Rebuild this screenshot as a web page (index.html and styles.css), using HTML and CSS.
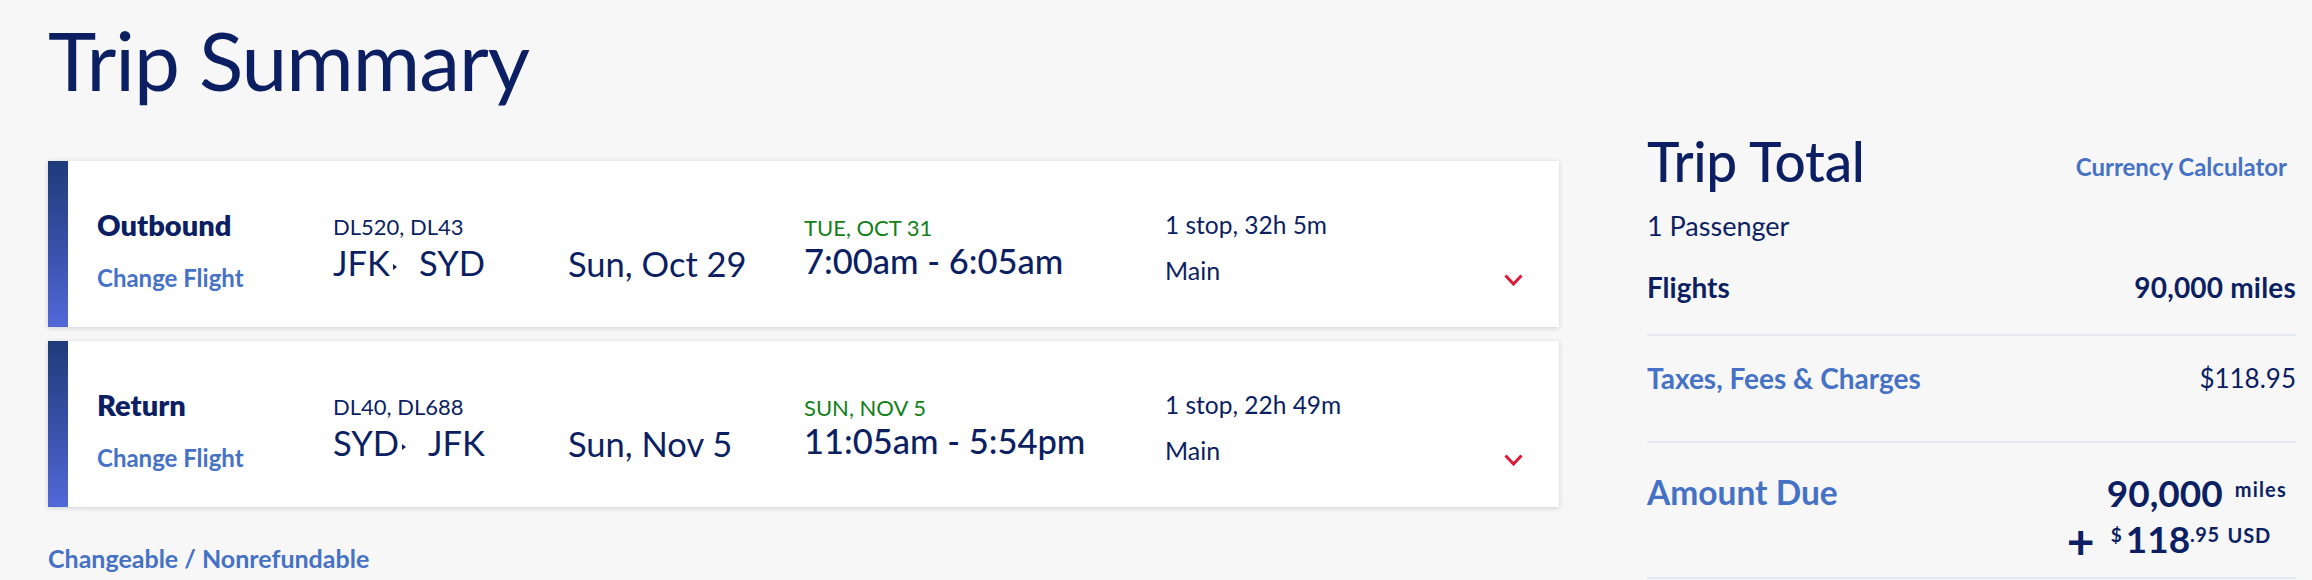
FILE: index.html
```html
<!DOCTYPE html>
<html lang="en">
<head>
<meta charset="utf-8">
<title>Trip Summary</title>
<link rel="stylesheet" href="styles.css">
</head>
<body>
<div class="page">
  <main class="left">
    <h1 class="title">Trip Summary</h1>
    <div class="cards">
      <section class="card">
        <div class="bar"></div>
        <div class="card-body">
          <div class="col col-label">
            <div class="leg">Outbound</div>
            <a class="change">Change Flight</a>
          </div>
          <div class="col col-flight">
            <div class="flightno">DL520, DL43</div>
            <div class="route">JFK<span class="sep"></span>SYD</div>
          </div>
          <div class="col col-date"><div class="date">Sun, Oct 29</div></div>
          <div class="col col-time">
            <div class="arrive">TUE, OCT 31</div>
            <div class="times">7:00am - 6:05am</div>
          </div>
          <div class="col col-stops">
            <div class="stops">1 stop, 32h 5m</div>
            <div class="cabin">Main</div>
          </div>
          <div class="col col-chev">
            <svg class="chev" width="19" height="12" viewBox="0 0 19 12"><path d="M1.5 1.5 L9.5 10 L17.5 1.5" fill="none" stroke="#e01937" stroke-width="3"/></svg>
          </div>
        </div>
      </section>
      <section class="card">
        <div class="bar"></div>
        <div class="card-body">
          <div class="col col-label">
            <div class="leg">Return</div>
            <a class="change">Change Flight</a>
          </div>
          <div class="col col-flight">
            <div class="flightno">DL40, DL688</div>
            <div class="route">SYD<span class="sep"></span>JFK</div>
          </div>
          <div class="col col-date"><div class="date">Sun, Nov 5</div></div>
          <div class="col col-time">
            <div class="arrive">SUN, NOV 5</div>
            <div class="times">11:05am - 5:54pm</div>
          </div>
          <div class="col col-stops">
            <div class="stops">1 stop, 22h 49m</div>
            <div class="cabin">Main</div>
          </div>
          <div class="col col-chev">
            <svg class="chev" width="19" height="12" viewBox="0 0 19 12"><path d="M1.5 1.5 L9.5 10 L17.5 1.5" fill="none" stroke="#e01937" stroke-width="3"/></svg>
          </div>
        </div>
      </section>
    </div>
    <a class="fare">Changeable / Nonrefundable</a>
  </main>
  <aside class="right">
    <div class="total-head">
      <h2 class="total-title">Trip Total</h2>
      <a class="calc">Currency Calculator</a>
    </div>
    <div class="pax">1 Passenger</div>
    <div class="row row-flights">
      <span class="row-label">Flights</span>
      <span class="row-value bold">90,000 miles</span>
    </div>
    <div class="row row-taxes">
      <a class="row-link">Taxes, Fees &amp; Charges</a>
      <span class="row-value">$118.95</span>
    </div>
    <div class="row row-due">
      <a class="due-label">Amount Due</a>
      <div class="due-amount">
        <div class="due-line1"><span class="big">90,000</span><span class="unit">miles</span></div>
        <div class="due-line2"><span class="plus">+</span><span class="cur">$</span><span class="big">118</span><span class="cents">.95</span><span class="usd">USD</span></div>
      </div>
    </div>
  </aside>
</div>
</body>
</html>
```

FILE: styles.css
```css
* { box-sizing: border-box; }

html, body {
  margin: 0;
  padding: 0;
  background: #f7f7f7;
}

body {
  font-family: "Lato", "Open Sans", "Liberation Sans", sans-serif;
  color: #0c1f63;
  width: 2312px;
  height: 580px;
  overflow: hidden;
}

a { text-decoration: none; cursor: pointer; }

.page {
  display: flex;
  align-items: flex-start;
}

/* ---------- left column ---------- */
.left {
  width: 1511px;
  margin-left: 48px;
}

.title {
  margin: 10px 0 53px 0;
  font-size: 82px;
  line-height: 98px;
  font-weight: 400;
  letter-spacing: -1px;
  color: #0c1f63;
}

.cards {
  display: flex;
  flex-direction: column;
  gap: 14px;
}

.card {
  display: flex;
  height: 166px;
  background: #fff;
  box-shadow: 0 1px 5px rgba(0, 0, 0, 0.17);
}

.bar {
  width: 20px;
  flex: none;
  background: linear-gradient(to bottom, #1f3b79 0%, #3a52ab 55%, #5168d8 100%);
}

.card-body {
  flex: 1;
  display: grid;
  grid-template-columns: 236px 235px 236px 361px 1fr 19px;
  padding: 0 36px 0 29px;
}

.col {
  display: flex;
  flex-direction: column;
  align-items: flex-start;
}

.col-label { padding-top: 46.5px; }
.leg {
  font-size: 29px;
  line-height: 34px;
  font-weight: 800;
  color: #0c1f63;
}
.change {
  margin-top: 21px;
  font-size: 24px;
  line-height: 30px;
  font-weight: 700;
  color: #4672c6;
}

.col-flight { padding-top: 52.5px; }
.flightno {
  font-size: 22px;
  line-height: 26px;
}
.route {
  margin-top: 2.5px;
  font-size: 34.5px;
  line-height: 42px;
}
.sep {
  display: inline-block;
  width: 0;
  height: 0;
  border-left: 4px solid #0c1f63;
  border-top: 3px solid transparent;
  border-bottom: 3px solid transparent;
  margin: 0 22px 0 3px;
  vertical-align: 6px;
}

.col-date { padding-top: 81.5px; }
.date {
  font-size: 34.5px;
  line-height: 42px;
}

.col-time { padding-top: 53.5px; }
.arrive {
  font-size: 22px;
  line-height: 26px;
  color: #13801a;
}
.times {
  margin-top: 0.3px;
  font-size: 34.5px;
  line-height: 40px;
  font-weight: 500;
}

.col-stops { padding-top: 49.5px; }
.stops {
  font-size: 24.5px;
  line-height: 28px;
}
.cabin {
  margin-top: 16.3px;
  font-size: 25px;
  line-height: 30px;
}

.col-chev { padding-top: 113px; }
.chev { display: block; }

.fare {
  display: block;
  margin-top: 36.3px;
  font-size: 25px;
  line-height: 30px;
  font-weight: 700;
  color: #4672c6;
}

/* ---------- right column ---------- */
.right {
  width: 649px;
  margin-left: 88px;
  padding-top: 129px;
}

.total-head {
  display: flex;
  justify-content: space-between;
  align-items: flex-start;
}

.total-title {
  margin: 0;
  font-size: 55px;
  line-height: 64px;
  font-weight: 500;
  letter-spacing: -0.3px;
  color: #0c1f63;
}

.calc {
  margin-top: 22.7px;
  margin-right: 9px;
  font-size: 24px;
  line-height: 30px;
  font-weight: 700;
  color: #4672c6;
}

.pax {
  margin-top: 17px;
  font-size: 27px;
  line-height: 32px;
}

.row {
  display: flex;
  justify-content: space-between;
  align-items: flex-start;
}

.row-flights {
  margin-top: 28px;
  padding-bottom: 30px;
  font-size: 28px;
  line-height: 34px;
}
.row-label { font-weight: 700; }
.bold { font-weight: 700; letter-spacing: 0.2px; }

.row-taxes {
  border-top: 2px solid #e4e9f2;
  padding-top: 24.6px;
  padding-bottom: 46.4px;
  font-size: 28px;
  line-height: 34px;
}
.row-link {
  font-weight: 700;
  color: #4672c6;
}
.row-taxes .row-value { font-size: 26px; }

.row-due {
  border-top: 2px solid #e4e9f2;
  border-bottom: 2px solid #e4e9f2;
  padding-top: 29px;
  padding-bottom: 17.5px;
}
.due-label {
  font-size: 33.5px;
  line-height: 40px;
  font-weight: 700;
  color: #4672c6;
}
.due-amount {
  display: flex;
  flex-direction: column;
  align-items: flex-end;
  font-weight: 700;
}
.due-line1,
.due-line2 {
  font-size: 37px;
  line-height: 40px;
  white-space: nowrap;
}
.due-line1 {
  padding-top: 1.5px;
  padding-right: 9px;
}
.due-line2 {
  margin-top: 6px;
  padding-right: 25px;
}
.unit,
.cur,
.cents,
.usd {
  line-height: 20px;
}
.unit {
  font-size: 20px;
  letter-spacing: 1.2px;
  margin-left: 12px;
  vertical-align: 10px;
}
.plus {
  font-size: 48px;
  line-height: 30px;
  margin-right: 16px;
  vertical-align: -6px;
}
.cur {
  font-size: 19px;
  margin-right: 4px;
  vertical-align: 11px;
}
.cents {
  font-size: 20px;
  vertical-align: 11px;
  letter-spacing: 0.5px;
}
.usd {
  font-size: 20px;
  margin-left: 8px;
  letter-spacing: 0.8px;
  vertical-align: 10px;
}
```
